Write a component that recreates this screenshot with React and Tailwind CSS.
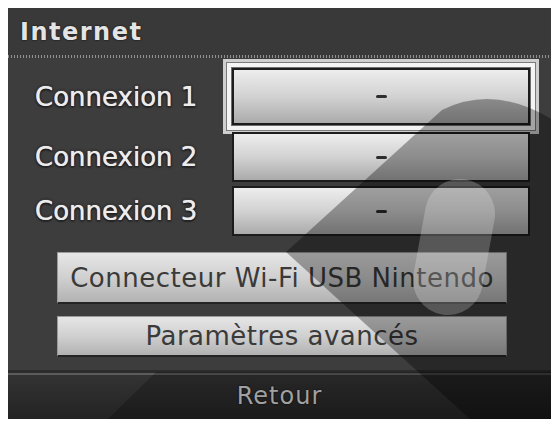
import React from 'react';

// Connection settings screen (Internet) – DS style menu
const ConnectionRow = ({ label, selected, tall }) => (
  <div className="flex items-center">
    <div className="w-[224px] shrink-0 pl-[27px] text-[26px] leading-none text-[#ececec] [text-shadow:0_0_1px_#fff,0_0_3px_#000,0_1px_2px_#000]">
      {label}
    </div>
    <div
      className={
        'w-[298px] border-2 border-[#1c1c1c] bg-linear-to-b from-[#ededed] via-[#d2d2d2] to-[#ababab] flex items-center justify-center ' +
        (tall ? 'h-[57px] ' : 'h-[50px] ') +
        (selected ? 'shadow-[0_0_0_1px_#6e6e6e,0_0_0_5px_#f4f4f4,0_0_0_6px_#7a7a7a,0_0_0_9px_#cfcfcf]' : '')
      }
    >
      <span className="block w-[11px] h-[3px] rounded-full bg-[#2e2e2e]" />
    </div>
  </div>
);

const WideButton = ({ children, className }) => (
  <div
    className={
      'ml-[49px] w-[450px] border border-[#9a9a9a] border-b-2 border-b-[#242424] bg-linear-to-b from-[#e6e6e6] via-[#d0d0d0] to-[#b2b2b2] flex items-center justify-center text-[26px] leading-none text-[#3a3a3a] tracking-[0.5px] ' +
      className
    }
  >
    {children}
  </div>
);

export default function App() {
  return (
    <div className="w-[559px] h-[423px] bg-white pt-[8px] pl-[8px]">
      <div className="relative w-[543px] h-[411px] bg-[#3d3d3d] flex flex-col overflow-hidden font-['DejaVu_Sans',sans-serif]">
        {/* header */}
        <div className="h-[47px] shrink-0 bg-[#393939] flex items-center pl-[12px] text-[24px] font-bold tracking-[1.5px] text-[#e4e4e4] [text-shadow:0_0_2px_#000]">
          Internet
        </div>
        <div className="h-[3px] shrink-0 bg-[repeating-linear-gradient(90deg,#8e8e8e_0_1px,transparent_1px_3px)]" />

        {/* connections */}
        <div className="mt-[10px] flex flex-col">
          <ConnectionRow label="Connexion 1" selected tall />
          <div className="mt-[7px]">
            <ConnectionRow label="Connexion 2" />
          </div>
          <div className="mt-[4px]">
            <ConnectionRow label="Connexion 3" />
          </div>
        </div>

        <WideButton className="mt-[16px] h-[52px]">Connecteur Wi-Fi USB Nintendo</WideButton>
        <WideButton className="mt-[12px] h-[41px]">Paramètres avancés</WideButton>

        {/* back bar */}
        <div className="mt-auto h-[49px] shrink-0 border-t-[3px] border-[#2c2c2c] shadow-[inset_0_2px_0_#5c5c5c] bg-linear-to-b from-[#343434] to-[#232323] flex items-center justify-center text-[24px] tracking-[1px] text-[#cfcfcf] [text-shadow:0_0_2px_#000]">
          Retour
        </div>

        <svg
          className="absolute inset-0 pointer-events-none"
          width="543"
          height="411"
          viewBox="0 0 543 411"
        >
          <path
            d="M434 102 Q487 76 545 112 L545 411 L462 411 L278 244 Z"
            fill="#000"
            fillOpacity="0.33"
          />
          <path d="M148 364 L545 364 L545 411 L100 411 Z" fill="#000" fillOpacity="0.22" />
          <path
            d="M452 206 L440 272"
            stroke="#fff"
            strokeOpacity="0.22"
            strokeWidth="70"
            strokeLinecap="round"
          />
        </svg>
      </div>
    </div>
  );
}
